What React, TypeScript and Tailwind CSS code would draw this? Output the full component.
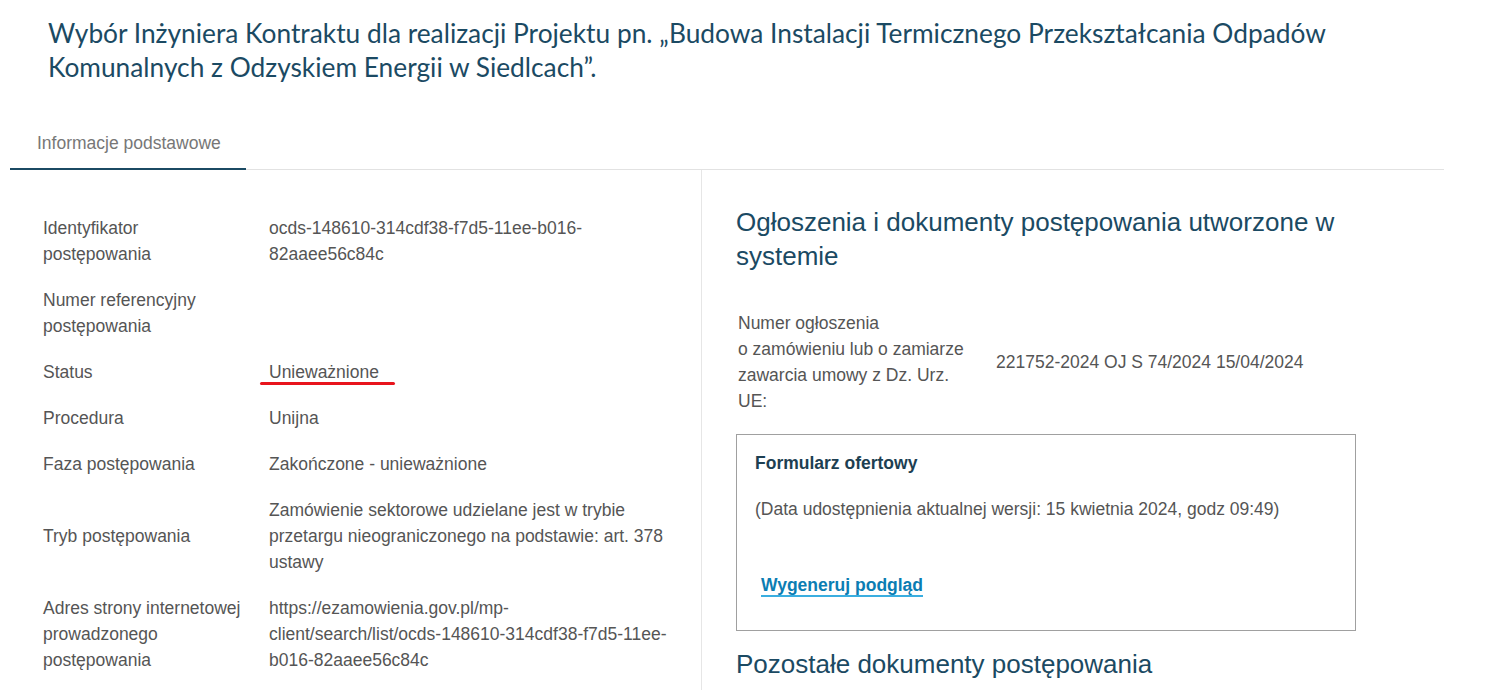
import React from "react";

const ink = "text-[#1b4a63]";

interface Row {
  label: string;
  value?: string;
  marked?: boolean;
}

const rows: Row[] = [
  {
    label: "Identyfikator postępowania",
    value: "ocds-148610-314cdf38-f7d5-11ee-b016-82aaee56c84c",
  },
  { label: "Numer referencyjny postępowania" },
  { label: "Status", value: "Unieważnione", marked: true },
  { label: "Procedura", value: "Unijna" },
  { label: "Faza postępowania", value: "Zakończone - unieważnione" },
  {
    label: "Tryb postępowania",
    value:
      "Zamówienie sektorowe udzielane jest w trybie przetargu nieograniczonego na podstawie: art. 378 ustawy",
  },
  {
    label: "Adres strony internetowej prowadzonego postępowania",
    value:
      "https://ezamowienia.gov.pl/mp-client/search/list/ocds-148610-314cdf38-f7d5-11ee-b016-82aaee56c84c",
  },
];

const InfoTable = ({ rows }: { rows: Row[] }) => (
  <div className="flex flex-col">
    {rows.map((row) => (
      <div key={row.label} className="flex items-center py-[10px]">
        <div className="w-[226px] shrink-0 pr-[24px]">{row.label}</div>
        <div className="w-[404px]">
          {row.marked ? (
            <span className="relative inline-block">
              {row.value}
              <span className="absolute -left-[9px] -right-[16px] top-[23px] h-[3px] rounded-full bg-[#e8141c]" />
            </span>
          ) : (
            row.value
          )}
        </div>
      </div>
    ))}
  </div>
);

export default function App() {
  return (
    <div className="h-[690px] overflow-hidden bg-white font-['Liberation_Sans',Arial,sans-serif] text-[17.5px] leading-[26px] text-[#555]">
      <h1
        className={`font-['Lato',sans-serif] text-[26.3px] leading-[34px] ${ink} pl-[48px] pt-[16px] max-w-[1390px]`}
      >
        Wybór Inżyniera Kontraktu dla realizacji Projektu pn. „Budowa
        Instalacji Termicznego Przekształcania Odpadów Komunalnych z Odzyskiem
        Energii w Siedlcach”.
      </h1>

      <div className="ml-[10px] mr-[56px] mt-[46px] border-b border-[#e2e2e2] flex">
        <div className="w-[236px] border-b-2 border-[#1b4a63] -mb-px pl-[27px] pb-[12px] text-[#777]">
          Informacje podstawowe
        </div>
      </div>

      <div className="ml-[10px] mr-[56px] flex min-h-[540px]">
        <div className="w-[692px] shrink-0 border-r border-[#e6e6e6] pl-[33px] pt-[35px]">
          <InfoTable rows={rows} />
        </div>

        <div className="flex-1 pl-[34px] pt-[35px]">
          <h2 className={`text-[26px] leading-[34px] ${ink} w-[625px]`}>
            Ogłoszenia i dokumenty postępowania utworzone w systemie
          </h2>

          <div className="flex items-center mt-[37px] pl-[2px]">
            <div className="w-[258px] shrink-0 pr-[24px]">
              Numer ogłoszenia
              <br />o zamówieniu lub o zamiarze zawarcia umowy z Dz. Urz. UE:
            </div>
            <div>221752-2024 OJ S 74/2024 15/04/2024</div>
          </div>

          <div className="mt-[20px] w-[620px] border border-[#a0a0a0] pl-[18px] pt-[15px] pb-[32px]">
            <div className="font-bold text-[#1d3f52]">Formularz ofertowy</div>
            <div className="mt-[20px]">
              (Data udostępnienia aktualnej wersji: 15 kwietnia 2024, godz
              09:49)
            </div>
            <a
              href="#"
              className="inline-block mt-[53px] ml-[6px] font-bold text-[#0b7db3] border-b-2 border-[#3aaee0] leading-[20px]"
            >
              Wygeneruj podgląd
            </a>
          </div>

          <h2 className={`mt-[16px] text-[26px] leading-[34px] ${ink}`}>
            Pozostałe dokumenty postępowania
          </h2>
        </div>
      </div>
    </div>
  );
}
